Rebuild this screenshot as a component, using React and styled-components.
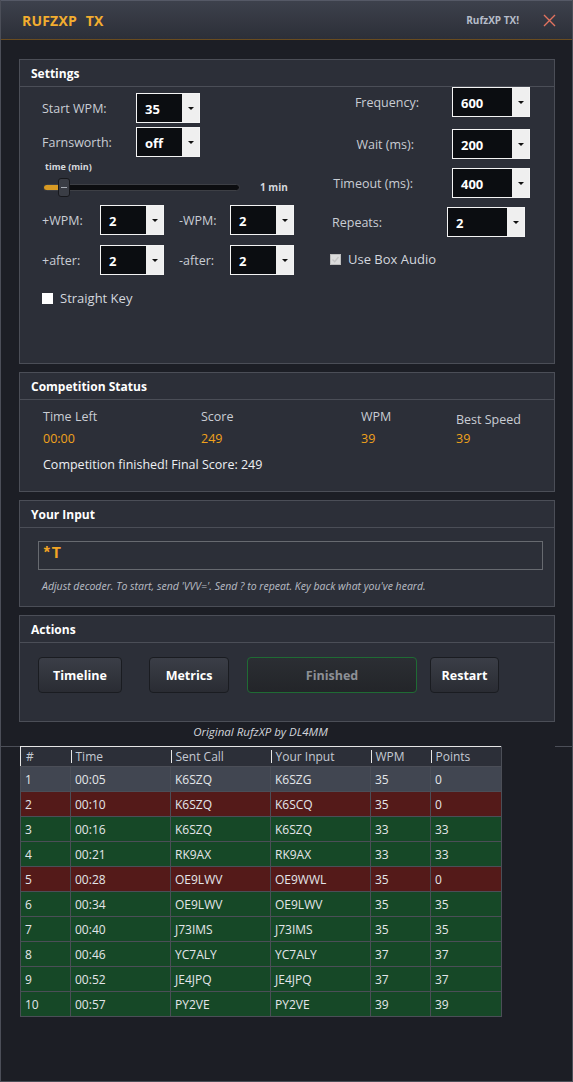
import React from 'react'
import styled, { createGlobalStyle } from 'styled-components'

const Global = createGlobalStyle`
  html, body {
    margin: 0;
    padding: 0;
    background: #1c1e25;
  }
  * { box-sizing: border-box; }
`

const Window = styled.div`
  width: 573px;
  height: 1082px;
  background: #1c1e25;
  border: 1px solid #4b4e58;
  border-top: none;
  font-family: "Open Sans", "Noto Sans", sans-serif;
  font-size: 12px;
  color: #c9cdd4;
  overflow: hidden;
`

const TitleBar = styled.div`
  height: 40px;
  display: flex;
  align-items: center;
  padding: 0 16px 0 21px;
  background: linear-gradient(#3d414c, #2c2f38);
  border-bottom: 1px solid #6a4c1f;
  border-top: 1px solid #555966;
`

const Brand = styled.div`
  flex: 1;
  color: #f2ad2f;
  font-weight: 700;
  font-size: 14px;
  word-spacing: 5px;
  letter-spacing: 0.2px;
`

const TitleTag = styled.div`
  color: #b6bdc9;
  font-weight: 700;
  font-size: 10px;
  margin-right: 24px;
`

const Close = styled.svg`
  width: 13px;
  height: 13px;
  display: block;
`

const Content = styled.div`
  padding: 19px 17px 0 18px;
`

const Panel = styled.section`
  background: #2c2f38;
  border: 1px solid #4b4e57;
  height: ${p => p.$h}px;
  margin-bottom: ${p => p.$mb ?? 8}px;
  display: flex;
  flex-direction: column;
`

const PanelHead = styled.div`
  height: 27px;
  flex: none;
  display: flex;
  align-items: center;
  padding-left: 11px;
  border-bottom: 1px solid #4b4e57;
  color: #fff;
  font-weight: 700;
  font-size: 12px;
`

const SettingsBody = styled.div`
  display: grid;
  grid-template-columns: 300px 1fr;
  flex: 1;
`

const LeftCol = styled.div`
  padding: 6px 0 0 22px;
  display: flex;
  flex-direction: column;
`

const RightCol = styled.div`
  display: flex;
  flex-direction: column;
`

const Row = styled.div`
  display: flex;
  align-items: center;
  margin-top: ${p => p.$mt || 0}px;
  padding-left: ${p => p.$pl || 0}px;
`

const Label = styled.span`
  width: ${p => p.$w}px;
  flex: none;
  text-align: ${p => p.$align || 'left'};
  margin-right: ${p => p.$mr || 0}px;
  margin-left: ${p => p.$ml || 0}px;
  font-size: 12.5px;
  color: #c9cdd4;
`

const Select = styled.div`
  width: ${p => p.$w}px;
  height: 30px;
  flex: none;
  display: flex;
  border: 1px solid #f4f4f4;
  background: #0b0d11;
`

const SelectValue = styled.div`
  flex: 1;
  display: flex;
  align-items: center;
  padding: 2px 0 0 8px;
  color: #fff;
  font-weight: 700;
  font-size: 13px;
`

const SelectArrow = styled.div`
  width: 17px;
  background: #efefef;
  display: flex;
  align-items: center;
  justify-content: center;

  &::after {
    content: '';
    border-left: 3px solid transparent;
    border-right: 3px solid transparent;
    border-top: 3px solid #111;
  }
`

const SliderCaption = styled.div`
  margin: 3px 0 0 3px;
  font-size: 9px;
  font-weight: 700;
  color: #d6d9de;
`

const SliderTrack = styled.div`
  position: relative;
  width: 197px;
  height: 7px;
  border-radius: 4px;
  background: #0c0d10;
  border: 1px solid #3d3f45;
  flex: none;
`

const SliderFill = styled.div`
  height: 100%;
  border-radius: 4px 0 0 4px;
  background: #d79a24;
`

const SliderThumb = styled.div`
  position: absolute;
  top: -7px;
  width: 12px;
  height: 19px;
  border-radius: 3px;
  background: #3a3d45;
  border: 1px solid #17181c;
  display: flex;
  align-items: center;
  justify-content: center;

  &::after {
    content: '';
    width: 6px;
    height: 1px;
    background: #a8acb4;
  }
`

const SliderValue = styled.span`
  margin-left: 20px;
  font-size: 10px;
  font-weight: 700;
  color: #d6d9de;
`

const Check = styled.span`
  width: 11px;
  height: 11px;
  flex: none;
  background: ${p => (p.$disabled ? '#dcdcdc' : '#fff')};
  border: 1px solid ${p => (p.$disabled ? '#bdbdbd' : '#fff')};
  display: flex;
  align-items: center;
  justify-content: center;
  margin-right: 7px;
`

const CheckText = styled.span`
  font-size: 13px;
  color: #d3d7de;
`

const StatsGrid = styled.div`
  display: grid;
  grid-template-columns: 158px 160px 95px 1fr;
  padding: 8px 0 0 23px;
`

const Stat = styled.div`
  display: flex;
  flex-direction: column;
  padding-top: ${p => p.$offset || 0}px;
`

const StatLabel = styled.span`
  font-size: 12.5px;
  color: #c9cdd4;
  line-height: 18px;
`

const StatValue = styled.span`
  margin-top: ${p => p.$mt ?? 4}px;
  font-size: 12.5px;
  color: #f0a21c;
  line-height: 18px;
`

const Finished = styled.div`
  padding: 8px 0 0 23px;
  color: #eef0f3;
  font-size: 12.5px;
`

const InputBody = styled.div`
  padding: 13px 11px 0 18px;
`

const InputBox = styled.div`
  height: 29px;
  border: 1px solid #676a70;
  display: flex;
  align-items: center;
  padding: 0 0 4px 3px;
  font-family: "Liberation Mono", "DejaVu Sans Mono", monospace;
  font-weight: 700;
  font-size: 16px;
  color: #f3a524;
`

const Hint = styled.div`
  margin: 9px 0 0 4px;
  font-size: 10.5px;
  font-style: italic;
  color: #b9bdc5;
`

const Actions = styled.div`
  display: flex;
  padding: 14px 0 0 0;
`

const ActionButton = styled.button`
  width: ${p => p.$w}px;
  height: 36px;
  margin-left: ${p => p.$ml}px;
  border-radius: 4px;
  border: 1px solid ${p => (p.$done ? '#1f6b34' : '#1a1c21')};
  background: ${p =>
    p.$done
      ? 'linear-gradient(#2b2e33, #232529)'
      : 'linear-gradient(#3b3e47, #2a2c33)'};
  color: ${p => (p.$done ? '#8d9096' : '#fff')};
  font-family: inherit;
  font-weight: 700;
  font-size: 12.5px;
  cursor: pointer;
`

const Credit = styled.div`
  width: 483px;
  text-align: center;
  margin-top: 2px;
  line-height: 16px;
  font-size: 11.5px;
  font-style: italic;
  color: #d2d5db;
`

const TableWrap = styled.div`
  display: flex;
  align-items: flex-start;
  margin: 6px -17px 0 -18px;
`

const Rule = styled.div`
  width: ${p => p.$w}px;
  height: 1px;
  background: #4b4e57;
  flex: none;
`

const RuleSpacer = styled.div`
  flex: 1;
  display: flex;
  justify-content: flex-end;
`

const Table = styled.table`
  border-collapse: collapse;
  width: 481px;
  table-layout: fixed;
  font-size: 12px;
  color: #e4e6ea;
`

const Th = styled.th`
  height: 20px;
  background: #2c2f38;
  border-top: 1px solid #e6e6e6;
  border-bottom: 1px solid #4b4e57;
  text-align: left;
  font-weight: 400;
  color: #c5cad3;
  padding: 0 0 0 5px;
  position: relative;

  &:first-child { border-left: 1px solid #e6e6e6; }
  &:last-child { border-right: 1px solid #4b4e57; }

  & + &::before {
    content: '';
    position: absolute;
    left: 0;
    top: 3px;
    bottom: 3px;
    width: 1px;
    background: #e6e6e6;
  }
`

const Td = styled.td`
  height: 25px;
  padding: 0 0 0 4px;
  border: 1px solid #4b4e57;
  background: ${p => p.$bg};
`

const ROW_BG = {
  sel: '#414651',
  bad: '#541a19',
  ok: '#164827',
}

const rows = [
  [1, '00:05', 'K6SZQ', 'K6SZG', 35, 0, 'sel'],
  [2, '00:10', 'K6SZQ', 'K6SCQ', 35, 0, 'bad'],
  [3, '00:16', 'K6SZQ', 'K6SZQ', 33, 33, 'ok'],
  [4, '00:21', 'RK9AX', 'RK9AX', 33, 33, 'ok'],
  [5, '00:28', 'OE9LWV', 'OE9WWL', 35, 0, 'bad'],
  [6, '00:34', 'OE9LWV', 'OE9LWV', 35, 35, 'ok'],
  [7, '00:40', 'J73IMS', 'J73IMS', 35, 35, 'ok'],
  [8, '00:46', 'YC7ALY', 'YC7ALY', 37, 37, 'ok'],
  [9, '00:52', 'JE4JPQ', 'JE4JPQ', 37, 37, 'ok'],
  [10, '00:57', 'PY2VE', 'PY2VE', 39, 39, 'ok'],
]

const cols = [
  ['#', 50],
  ['Time', 100],
  ['Sent Call', 100],
  ['Your Input', 100],
  ['WPM', 60],
  ['Points', 71],
]

const Dropdown = ({ value, w = 64 }) => (
  <Select $w={w}>
    <SelectValue>{value}</SelectValue>
    <SelectArrow />
  </Select>
)

const App = () => {
  return (
    <Window>
      <Global />
      <TitleBar>
        <Brand>RUFZXP TX</Brand>
        <TitleTag>RufzXP TX!</TitleTag>
        <Close viewBox="0 0 13 13">
          <path d="M1 1 L12 12 M12 1 L1 12" stroke="#e2735f" strokeWidth="1.4" />
        </Close>
      </TitleBar>

      <Content>
        <Panel $h={305}>
          <PanelHead>Settings</PanelHead>
          <SettingsBody>
            <LeftCol>
              <Row>
                <Label $w={94}>Start WPM:</Label>
                <Dropdown value="35" />
              </Row>
              <Row $mt={4}>
                <Label $w={94}>Farnsworth:</Label>
                <Dropdown value="off" />
              </Row>
              <SliderCaption>time (min)</SliderCaption>
              <Row $mt={7} $pl={1}>
                <SliderTrack>
                  <SliderFill style={{ width: '8%' }} />
                  <SliderThumb style={{ left: '7%' }} />
                </SliderTrack>
                <SliderValue>1 min</SliderValue>
              </Row>
              <Row $mt={11}>
                <Label $w={58}>+WPM:</Label>
                <Dropdown value="2" />
                <Label $w={51} $ml={15}>-WPM:</Label>
                <Dropdown value="2" />
              </Row>
              <Row $mt={10}>
                <Label $w={58}>+after:</Label>
                <Dropdown value="2" />
                <Label $w={51} $ml={15}>-after:</Label>
                <Dropdown value="2" />
              </Row>
              <Row $mt={14} $pl={-3}>
                <Check />
                <CheckText>Straight Key</CheckText>
              </Row>
            </LeftCol>

            <RightCol>
              <Row $mt={0}>
                <Label $w={99} $align="right" $mr={33}>Frequency:</Label>
                <Dropdown value="600" w={78} />
              </Row>
              <Row $mt={12}>
                <Label $w={94} $align="right" $mr={38}>Wait (ms):</Label>
                <Dropdown value="200" w={78} />
              </Row>
              <Row $mt={9}>
                <Label $w={93} $align="right" $mr={39}>Timeout (ms):</Label>
                <Dropdown value="400" w={78} />
              </Row>
              <Row $mt={9} $pl={12}>
                <Label $w={115}>Repeats:</Label>
                <Dropdown value="2" w={78} />
              </Row>
              <Row $mt={13} $pl={10}>
                <Check $disabled>
                  <svg width="9" height="9" viewBox="0 0 9 9">
                    <path d="M1.5 4.5 L3.7 6.7 L7.5 2" stroke="#c4c4c4" strokeWidth="1.3" fill="none" />
                  </svg>
                </Check>
                <CheckText>Use Box Audio</CheckText>
              </Row>
            </RightCol>
          </SettingsBody>
        </Panel>

        <Panel $h={120} $mb={8}>
          <PanelHead>Competition Status</PanelHead>
          <StatsGrid>
            <Stat>
              <StatLabel>Time Left</StatLabel>
              <StatValue>00:00</StatValue>
            </Stat>
            <Stat>
              <StatLabel>Score</StatLabel>
              <StatValue>249</StatValue>
            </Stat>
            <Stat>
              <StatLabel>WPM</StatLabel>
              <StatValue>39</StatValue>
            </Stat>
            <Stat $offset={3}>
              <StatLabel>Best Speed</StatLabel>
              <StatValue $mt={1}>39</StatValue>
            </Stat>
          </StatsGrid>
          <Finished>Competition finished! Final Score: 249</Finished>
        </Panel>

        <Panel $h={107} $mb={8}>
          <PanelHead>Your Input</PanelHead>
          <InputBody>
            <InputBox>*T</InputBox>
            <Hint>Adjust decoder. To start, send 'VVV='. Send ? to repeat. Key back what you've heard.</Hint>
          </InputBody>
        </Panel>

        <Panel $h={107} $mb={0}>
          <PanelHead>Actions</PanelHead>
          <Actions>
            <ActionButton $w={84} $ml={18}>Timeline</ActionButton>
            <ActionButton $w={80} $ml={27}>Metrics</ActionButton>
            <ActionButton $w={170} $ml={18} $done>Finished</ActionButton>
            <ActionButton $w={69} $ml={13}>Restart</ActionButton>
          </Actions>
        </Panel>

        <Credit>Original RufzXP by DL4MM</Credit>

        <TableWrap>
          <Rule $w={19} />
          <Table>
            <colgroup>
              {cols.map(([name, w]) => (
                <col key={name} style={{ width: w }} />
              ))}
            </colgroup>
            <thead>
              <tr>
                {cols.map(([name]) => (
                  <Th key={name}>{name}</Th>
                ))}
              </tr>
            </thead>
            <tbody>
              {rows.map(r => (
                <tr key={r[0]}>
                  {r.slice(0, 6).map((c, i) => (
                    <Td key={i} $bg={ROW_BG[r[6]]}>{c}</Td>
                  ))}
                </tr>
              ))}
            </tbody>
          </Table>
          <RuleSpacer>
            <Rule $w={17} />
          </RuleSpacer>
        </TableWrap>
      </Content>
    </Window>
  )
}

export default App
